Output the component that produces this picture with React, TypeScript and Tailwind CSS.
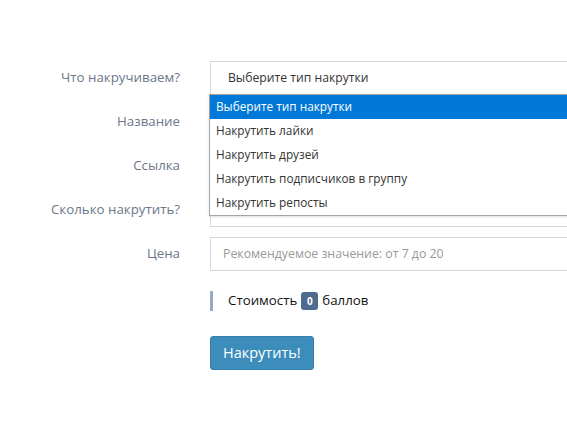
import React from "react";

const OPTIONS = [
  "Выберите тип накрутки",
  "Накрутить лайки",
  "Накрутить друзей",
  "Накрутить подписчиков в группу",
  "Накрутить репосты",
];

function Row({ label, children }: { label: string; children?: React.ReactNode }) {
  return (
    <div className="flex items-center h-[34px] mb-[10px]">
      <label className="w-[180px] shrink-0 text-right text-[13.3px] text-[#6b7789]">{label}</label>
      <div className="ml-[30px] w-[420px] shrink-0 relative">{children}</div>
    </div>
  );
}

export default function App() {
  return (
    <div
      className="w-[567px] h-[427px] overflow-hidden bg-white"
      style={{ fontFamily: '"Open Sans", "Noto Sans", sans-serif' }}
    >
      <div className="pt-[61px]">
        <Row label="Что накручиваем?">
          <div className="h-[34px] border border-[#d2d6de] bg-white flex items-center pl-[17px] text-[12.2px] text-[#333]">
            Выберите тип накрутки
          </div>
          <div className="absolute left-[-1px] top-[33px] w-[430px] z-10 border border-[#a5a5a5] bg-white shadow-sm text-[11.8px] text-[#333]">
            {OPTIONS.map((o, i) => (
              <div
                key={o}
                className={`h-[24px] flex items-center pl-[6px] ${i === 0 ? "bg-[#0078d7] text-white" : ""}`}
              >
                {o}
              </div>
            ))}
          </div>
        </Row>
        <Row label="Название">
          <div className="h-[34px] border border-[#d2d6de]" />
        </Row>
        <Row label="Ссылка">
          <div className="h-[34px] border border-[#d2d6de]" />
        </Row>
        <Row label="Сколько накрутить?">
          <div className="h-[34px] border border-[#d2d6de]" />
        </Row>
        <Row label="Цена">
          <div className="h-[34px] border border-[#d2d6de] flex items-center pl-[12px] text-[12.3px] text-[#999]">
            Рекомендуемое значение: от 7 до 20
          </div>
        </Row>

        <div className="ml-[210px] mt-[20px] border-l-[3px] border-[#93abc8] pl-[15px] h-[20px] flex items-center text-[13.3px] text-[#111]">
          Стоимость
          <span className="mx-[4px] h-[18px] min-w-[17px] px-[4px] rounded-[3px] bg-[#4f6b90] text-white text-[10px] font-bold flex items-center justify-center">
            0
          </span>
          баллов
        </div>

        <div className="ml-[210px] mt-[25px]">
          <button className="h-[34px] px-[12px] rounded-[3px] bg-[#3c8dbc] border border-[#367fa9] text-white text-[14.5px]">
            Накрутить!
          </button>
        </div>
      </div>
    </div>
  );
}
